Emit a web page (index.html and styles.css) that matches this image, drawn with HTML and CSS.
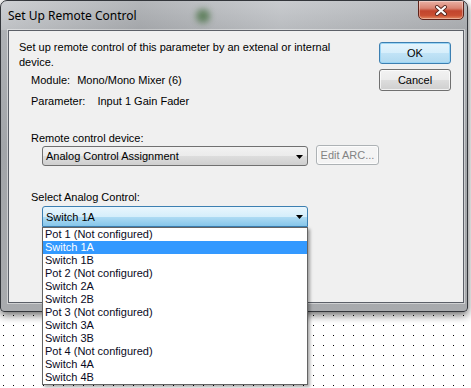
FILE: index.html
```html
<!DOCTYPE html>
<html lang="en">
<head>
  <meta charset="UTF-8">
  <title>Set Up Remote Control</title>
  <link rel="stylesheet" href="styles.css">
</head>
<body>
  <svg class="dots" width="471" height="388">
    <defs>
      <pattern id="dotgrid" width="10" height="10" patternUnits="userSpaceOnUse">
        <rect x="3" y="5" width="1" height="1" fill="#000"/>
      </pattern>
    </defs>
    <rect width="471" height="388" fill="url(#dotgrid)"/>
  </svg>

  <div class="window">
    <div class="titlebar">
      <span class="blur-spot"></span>
      <span class="title">Set Up Remote Control</span>
      <button class="close">
        <svg width="14" height="11" viewBox="0 0 14 11">
          <path d="M3 2 L11 9 M11 2 L3 9" stroke="#5a2a22" stroke-width="4" stroke-linecap="round"/>
          <path d="M3 2 L11 9 M11 2 L3 9" stroke="#fff" stroke-width="2.2" stroke-linecap="round"/>
        </svg>
      </button>
    </div>

    <div class="client">
      <div class="main">
        <p class="intro">Set up remote control of this parameter by an extenal or internal device.</p>
        <div class="info first"><span class="label-module">Module:</span>Mono/Mono Mixer (6)</div>
        <div class="info"><span class="label-param">Parameter:</span>Input 1 Gain Fader</div>

        <div class="group">
          <div class="group-label">Remote control device:</div>
          <div class="combo-row">
            <div class="combo">
              <span>Analog Control Assignment</span>
              <svg class="arrow" width="7" height="4"><path d="M0 0 H7 L3.5 4 Z" fill="#000"/></svg>
            </div>
            <button class="btn disabled">Edit ARC...</button>
          </div>
        </div>

        <div class="group second">
          <div class="group-label">Select Analog Control:</div>
          <div class="combo-row">
            <div class="combo open">
              <span>Switch 1A</span>
              <svg class="arrow" width="7" height="4"><path d="M0 0 H7 L3.5 4 Z" fill="#000"/></svg>
              <ul class="dropdown">
                <li>Pot 1 (Not configured)</li>
                <li class="selected">Switch 1A</li>
                <li>Switch 1B</li>
                <li>Pot 2 (Not configured)</li>
                <li>Switch 2A</li>
                <li>Switch 2B</li>
                <li>Pot 3 (Not configured)</li>
                <li>Switch 3A</li>
                <li>Switch 3B</li>
                <li>Pot 4 (Not configured)</li>
                <li>Switch 4A</li>
                <li>Switch 4B</li>
              </ul>
            </div>
          </div>
        </div>
      </div>

      <div class="actions">
        <button class="btn default">OK</button>
        <button class="btn">Cancel</button>
      </div>
    </div>
  </div>
</body>
</html>
```

FILE: styles.css
```css
* {
  box-sizing: border-box;
}
body {
  margin: 0;
  width: 471px;
  height: 388px;
  overflow: hidden;
  position: relative;
  background: #fff;
  font-family: "Liberation Sans", Arial, sans-serif;
  font-size: 11px;
  color: #000;
}
.dots {
  position: absolute;
  left: 0;
  top: 0;
}
.window {
  position: relative;
  width: 468px;
  height: 312px;
  border: 1px solid #33363b;
  border-radius: 7px 7px 4px 4px;
  background: linear-gradient(180deg, #c2c5c9 0px, #aeb1b5 30px, #a2a5a9 150px, #a9abae 312px);
  box-shadow: 0 3px 9px rgba(0, 0, 0, 0.6);
  display: flex;
  flex-direction: column;
}
.titlebar {
  position: relative;
  height: 29px;
  display: flex;
  align-items: center;
  padding-left: 7px;
  overflow: hidden;
  border-radius: 6px 6px 0 0;
  background: linear-gradient(90deg, rgba(255,255,255,0.2), rgba(80,80,80,0.12) 30%, rgba(255,255,255,0.12) 60%, rgba(120,120,120,0.15));
}
.blur-spot {
  position: absolute;
  left: 195px;
  top: 8px;
  width: 14px;
  height: 14px;
  border-radius: 50%;
  background: #3f6b3a;
  filter: blur(3px);
  opacity: 0.7;
}
.title {
  position: relative;
  font-family: "Noto Sans", "Open Sans", sans-serif;
  font-size: 12px;
  margin-top: -1px;
}
.close {
  position: absolute;
  right: 3px;
  top: -1px;
  width: 46px;
  height: 20px;
  padding: 0;
  border: 1px solid #5e2219;
  border-radius: 0 0 5px 5px;
  background: linear-gradient(180deg, #eab1a4 0%, #d98472 40%, #c2452d 55%, #c94e32 80%, #e48a62 100%);
  box-shadow: inset 0 0 0 1px rgba(255, 255, 255, 0.35);
  display: flex;
  align-items: center;
  justify-content: center;
}
.client {
  flex: 1;
  margin: 0 3px 8px 7px;
  border: 1px solid #5c6068;
  box-shadow: 0 0 0 1px rgba(255, 255, 255, 0.45);
  background: #f0f0f0;
  display: flex;
}
.main {
  flex: 1;
  padding: 9px 0 0 10px;
}
.intro {
  margin: 0;
  width: 330px;
  line-height: 15px;
}
.info {
  line-height: 15px;
  padding-left: 12px;
  margin-top: 6px;
}
.info.first {
  margin-top: 3px;
}
.label-module {
  margin-right: 7px;
}
.label-param {
  margin-right: 12px;
}
.group {
  padding-left: 12px;
  margin-top: 22px;
}
.group.second {
  margin-top: 24px;
}
.group-label {
  line-height: 15px;
}
.combo-row {
  display: flex;
  gap: 8px;
  margin-left: 11px;
}
.combo {
  position: relative;
  width: 266px;
  height: 20px;
  border: 1px solid #707070;
  border-radius: 3px;
  background: linear-gradient(180deg, #f2f2f2 0%, #ebebeb 50%, #dddddd 51%, #cfcfcf 100%);
  display: flex;
  align-items: center;
  padding-left: 3px;
}
.combo.open {
  height: 21px;
  margin-top: 1px;
  border-color: #3c7fb1;
  border-radius: 3px 3px 0 0;
  background: linear-gradient(180deg, #e9f6fd 0%, #d5eefb 50%, #b0dcf4 51%, #86c6ea 100%);
}
.combo .arrow {
  position: absolute;
  right: 4px;
  top: 8px;
}
.btn {
  font-family: inherit;
  font-size: 11px;
  color: #000;
  padding: 0;
  border: 1px solid #707070;
  border-radius: 3px;
  background: linear-gradient(180deg, #f2f2f2 0%, #ebebeb 50%, #dddddd 51%, #cfcfcf 100%);
  box-shadow: inset 0 0 0 1px rgba(255, 255, 255, 0.7);
}
.btn.disabled {
  width: 63px;
  height: 20px;
  margin-top: -1px;
  color: #838383;
  border-color: #adb2b5;
  background: #f4f4f4;
}
.actions {
  display: flex;
  flex-direction: column;
  gap: 5px;
  padding: 11px 13px 0 0;
}
.actions .btn {
  width: 72px;
  height: 22px;
}
.btn.default {
  border-color: #3c7fb1;
  background: linear-gradient(180deg, #e5f4fc 0%, #d6eefb 50%, #c1e3f6 51%, #b0d9f0 100%);
  box-shadow: inset 0 0 0 1px #9bd5f5;
}
.dropdown {
  position: absolute;
  left: -1px;
  top: 20px;
  width: 266px;
  height: 158px;
  margin: 0;
  padding: 0;
  list-style: none;
  background: #fff;
  border: 1px solid #646464;
  box-shadow: 2px 2px 3px rgba(0, 0, 0, 0.35);
  z-index: 5;
}
.dropdown li {
  height: 13px;
  line-height: 13px;
  padding-left: 2px;
  color: #0a0a1e;
}
.dropdown li.selected {
  background: #3399ff;
  color: #fff;
}
```
